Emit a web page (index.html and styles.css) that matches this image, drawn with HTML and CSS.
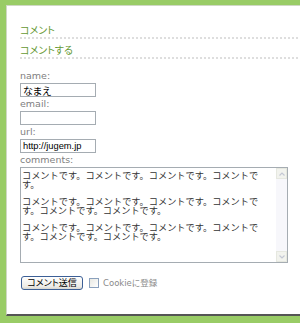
FILE: index.html
```html
<!DOCTYPE html>
<html lang="ja">
<head>
    <meta charset="UTF-8">
    <meta name="viewport" content="width=device-width, initial-scale=1.0">
    <title>コメント</title>
    <link rel="stylesheet" href="styles.css">
</head>
<body>
    <div class="panel">
        <h2 class="title">コメント</h2>
        <h2 class="title">コメントする</h2>

        <form class="comment-form">
            <label for="name">name:</label>
            <input type="text" id="name" class="field" value="なまえ">

            <label for="email">email:</label>
            <input type="text" id="email" class="field">

            <label for="url">url:</label>
            <input type="text" id="url" class="field field-url" value="http://jugem.jp">

            <label for="comments">comments:</label>
            <div class="comment-box">
                <textarea id="comments">コメントです。コメントです。コメントです。コメントです。

コメントです。コメントです。コメントです。コメントです。コメントです。コメントです。

コメントです。コメントです。コメントです。コメントです。コメントです。コメントです。</textarea>
                <div class="scrollbar">
                    <span class="scroll-btn">
                        <svg width="8" height="8" viewBox="0 0 8 8"><path d="M1.5 5.5 L4 3 L6.5 5.5" fill="none" stroke="#c4c8d4" stroke-width="1.2"/></svg>
                    </span>
                    <span class="scroll-btn">
                        <svg width="8" height="8" viewBox="0 0 8 8"><path d="M1.5 2.5 L4 5 L6.5 2.5" fill="none" stroke="#c4c8d4" stroke-width="1.2"/></svg>
                    </span>
                </div>
            </div>

            <div class="submit-row">
                <button type="button" class="submit">コメント送信</button>
                <input type="checkbox" id="cookie" class="check">
                <label for="cookie" class="cookie">Cookieに登録</label>
            </div>
        </form>
    </div>
</body>
</html>
```

FILE: styles.css
```css
html {
    overflow: hidden;
}

body {
    margin: 0;
    background-color: #99cc66;
    font-family: "DejaVu Sans", "Noto Sans CJK JP", sans-serif;
}

.panel {
    margin: 5px 0 0 6px;
    padding: 13px 0 24px 13px;
    background-color: #fff;
    border-top: 1px solid #cfd8c4;
    border-left: 1px solid #cfd8c4;
    border-bottom: 2px solid #555;
}

.title {
    margin: 0;
    padding: 5px 0 4px;
    font-family: "Noto Sans CJK JP", sans-serif;
    font-feature-settings: "palt";
    font-size: 10px;
    font-weight: normal;
    line-height: 11px;
    color: #669933;
    background: linear-gradient(to right, #dedede 2px, transparent 2px) repeat-x left bottom / 4px 2px;
}

.comment-form {
    margin-top: 10px;
}

.comment-form label {
    display: block;
    font-size: 9.5px;
    line-height: 14px;
    color: #808080;
}

.field {
    display: block;
    box-sizing: border-box;
    width: 76px;
    height: 14px;
    margin: 0;
    padding: 0 2px;
    border: 1px solid #a5acb2;
    font-family: "Noto Sans CJK JP", sans-serif;
    font-feature-settings: "palt";
    font-size: 10px;
    color: #000;
}

.field-url {
    font-family: "Liberation Sans", sans-serif;
    font-size: 9.3px;
}

.comment-box {
    display: flex;
    width: 268px;
    height: 96px;
    box-sizing: border-box;
    border: 1px solid #a5acb2;
}

.comment-box textarea {
    flex: 1;
    margin: 0;
    padding: 3px 10px 0 1px;
    border: 0;
    outline: none;
    resize: none;
    overflow: hidden;
    font-family: "Noto Sans CJK JP", sans-serif;
    font-size: 9.2px;
    line-height: 8.7px;
    color: #333;
}

.scrollbar {
    width: 11px;
    display: flex;
    flex-direction: column;
    justify-content: space-between;
    background-color: #f7f7fb;
}

.scroll-btn {
    display: flex;
    align-items: center;
    justify-content: center;
    height: 11px;
    box-sizing: border-box;
    background-color: #f2f3ee;
    border: 1px solid #e6e8e0;
}

.submit-row {
    display: flex;
    align-items: center;
    margin-top: 13px;
}

.submit {
    width: 62px;
    height: 14px;
    margin: 0 0 0 1px;
    padding: 0;
    border: 1px solid #3c5f96;
    border-radius: 3px;
    background: linear-gradient(#ffffff, #ecebe6 80%, #d6d6d0);
    font-family: "Noto Sans CJK JP", sans-serif;
    font-feature-settings: "palt";
    font-size: 9px;
    line-height: 12px;
    color: #000;
}

.check {
    appearance: none;
    width: 10px;
    height: 10px;
    margin: 0 0 0 6px;
    border: 1px solid #8aa0bc;
    background: linear-gradient(135deg, #e8e8e2, #fff);
}

.comment-form .cookie {
    display: inline;
    margin-left: 4px;
    font-size: 8.5px;
    line-height: 14px;
    color: #8a8a8a;
}
```
